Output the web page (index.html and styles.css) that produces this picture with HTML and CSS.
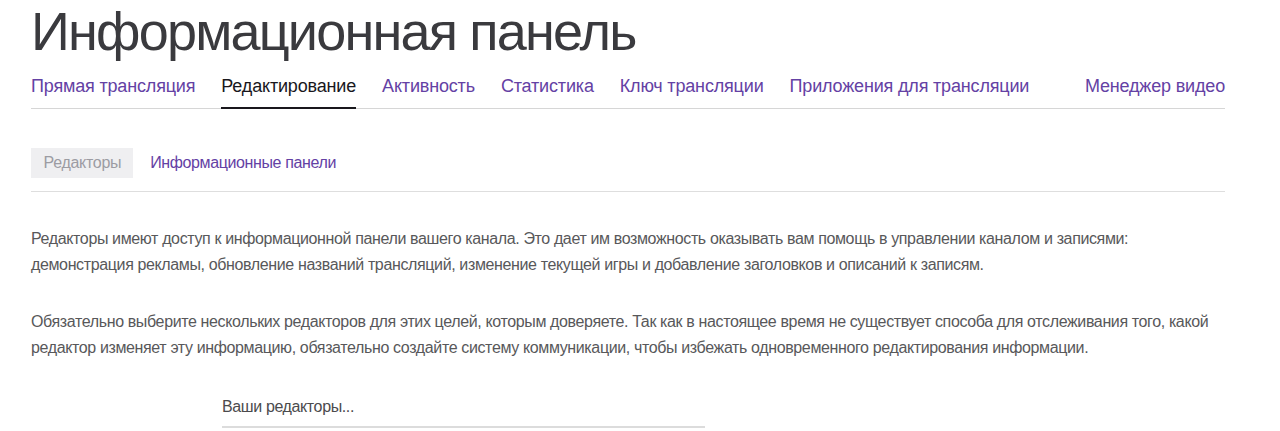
FILE: index.html
```html
<!DOCTYPE html>
<html lang="ru">
<head>
<meta charset="utf-8">
<title>Информационная панель</title>
<link rel="stylesheet" href="styles.css">
</head>
<body>
<div class="page">
  <h1 class="title">Информационная панель</h1>
  <nav class="tabs">
    <a class="tab">Прямая трансляция</a>
    <a class="tab active">Редактирование</a>
    <a class="tab">Активность</a>
    <a class="tab">Статистика</a>
    <a class="tab">Ключ трансляции</a>
    <a class="tab">Приложения для трансляции</a>
    <a class="tab tab-end">Менеджер видео</a>
  </nav>
  <div class="subtabs">
    <span class="subtab selected">Редакторы</span>
    <a class="subtab">Информационные панели</a>
  </div>
  <p class="text first">Редакторы имеют доступ к информационной панели вашего канала. Это дает им возможность оказывать вам помощь в управлении каналом и записями:<br>демонстрация рекламы, обновление названий трансляций, изменение текущей игры и добавление заголовков и описаний к записям.</p>
  <p class="text second">Обязательно выберите нескольких редакторов для этих целей, которым доверяете. Так как в настоящее время не существует способа для отслеживания того, какой<br>редактор изменяет эту информацию, обязательно создайте систему коммуникации, чтобы избежать одновременного редактирования информации.</p>
  <div class="field">
    <input class="editor-input" type="text" placeholder="Ваши редакторы...">
  </div>
</div>
</body>
</html>
```
FILE: styles.css
```css
html, body {
  margin: 0;
  padding: 0;
  background: #ffffff;
}
.page {
  width: 1194px;
  margin-left: 31px;
  font-family: "Liberation Sans", Arial, sans-serif;
}
.title {
  margin: 0;
  font-size: 54px;
  line-height: 62px;
  letter-spacing: -1.8px;
  font-weight: normal;
  color: #3a3a3e;
}
.tabs {
  display: flex;
  gap: 26px;
  margin-top: 13px;
  border-bottom: 1px solid #d6d6d6;
}
.tab {
  font-size: 18px;
  line-height: 22px;
  letter-spacing: -0.17px;
  padding-bottom: 10px;
  margin-bottom: -1px;
  border-bottom: 2px solid transparent;
  color: #6441a4;
  cursor: pointer;
}
.tab.active {
  color: #19171c;
  border-bottom-color: #19171c;
}
.tab-end {
  margin-left: auto;
}
.subtabs {
  display: flex;
  align-items: center;
  gap: 5px;
  margin-top: 39px;
  padding-bottom: 13px;
  border-bottom: 1px solid #dedede;
}
.subtab {
  font-size: 16px;
  line-height: 30px;
  letter-spacing: -0.38px;
  padding: 0 12px;
  color: #6441a4;
}
.subtab.selected {
  background: #efeff1;
  color: #9c9ca3;
  padding: 0 12px 0 12.5px;
  letter-spacing: -0.3px;
}
.text {
  margin: 0;
  font-size: 16px;
  line-height: 26px;
  letter-spacing: -0.37px;
  color: #58585a;
}
.text.first {
  margin-top: 34px;
}
.text.second {
  margin-top: 31px;
}
.field {
  margin-top: 29px;
  margin-left: 191px;
}
.editor-input {
  display: block;
  box-sizing: border-box;
  width: 483px;
  height: 38px;
  padding: 0 0 2px 0;
  border: 0;
  border-bottom: 2px solid #dcdcdc;
  outline: none;
  font-family: "Liberation Sans", Arial, sans-serif;
  font-size: 16px;
  letter-spacing: -0.38px;
  color: #333;
  background: transparent;
}
.editor-input::placeholder {
  color: #4b4b4d;
}
```
